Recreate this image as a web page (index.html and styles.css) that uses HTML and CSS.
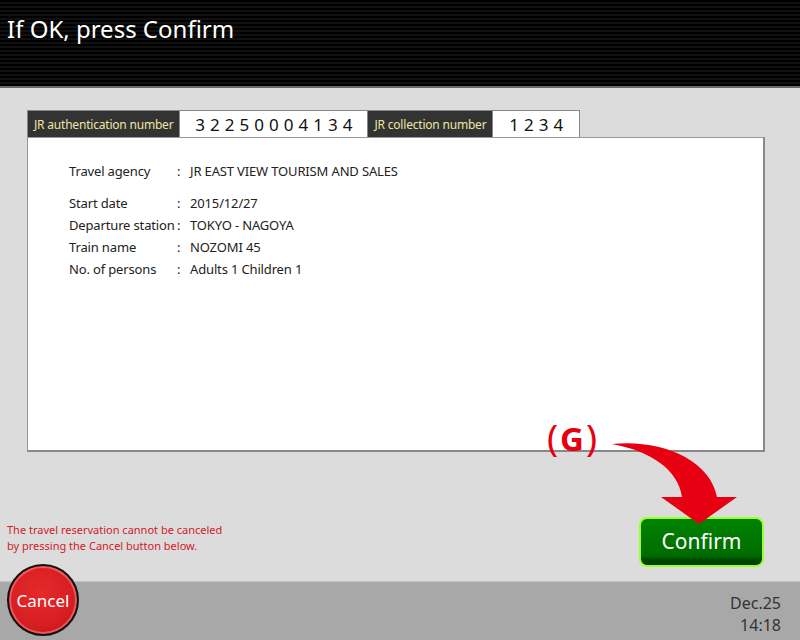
FILE: index.html
```html
<!DOCTYPE html>
<html lang="en">
<head>
    <meta charset="UTF-8">
    <meta name="viewport" content="width=device-width, initial-scale=1.0">
    <title>Confirm Reservation</title>
    <link rel="stylesheet" href="styles.css">
</head>
<body>
    <div class="screen">
        <div class="header">
            <h1>If OK, press Confirm</h1>
        </div>
        <div class="main">
            <div class="tabs">
                <div class="tab-label">JR authentication number</div>
                <div class="tab-value auth">3 2 2 5 0 0 0 4 1 3 4</div>
                <div class="tab-label">JR collection number</div>
                <div class="tab-value coll">1 2 3 4</div>
            </div>
            <div class="details">
                <div class="row first">
                    <span class="key">Travel agency</span><span class="colon">:</span><span class="val">JR EAST VIEW TOURISM AND SALES</span>
                </div>
                <div class="row">
                    <span class="key">Start date</span><span class="colon">:</span><span class="val">2015/12/27</span>
                </div>
                <div class="row">
                    <span class="key">Departure station</span><span class="colon">:</span><span class="val">TOKYO - NAGOYA</span>
                </div>
                <div class="row">
                    <span class="key">Train name</span><span class="colon">:</span><span class="val">NOZOMI 45</span>
                </div>
                <div class="row">
                    <span class="key">No. of persons</span><span class="colon">:</span><span class="val">Adults 1 Children 1</span>
                </div>
            </div>
            <div class="actions">
                <p class="note">The travel reservation cannot be canceled<br>by pressing the Cancel button below.</p>
                <button class="confirm">Confirm</button>
                <div class="marker"><span class="paren">(</span>G<span class="paren">)</span></div>
                <svg class="arrow" width="140" height="90" viewBox="0 0 140 90">
                    <path d="M2,7 C50,2 100,22 107,60 L127,60 L89,87 L51,60 L72,60 C68,32 40,14 2,7 Z" fill="#e60012"/>
                </svg>
            </div>
        </div>
        <div class="footer">
            <button class="cancel">Cancel</button>
            <div class="clock">
                <div>Dec.25</div>
                <div>14:18</div>
            </div>
        </div>
    </div>
</body>
</html>
```

FILE: styles.css
```css
body, html {
    margin: 0;
    padding: 0;
    width: 100%;
    height: 100%;
    font-family: "Noto Sans", "Open Sans", Arial, sans-serif;
    background: #dcdcdc;
    overflow: hidden;
}

.screen {
    display: flex;
    flex-direction: column;
    height: 640px;
    position: relative;
}

.header {
    height: 86px;
    background: repeating-linear-gradient(to bottom, #000 0, #000 2px, #111 2px, #111 4px);
    border-bottom: 2px solid #6a6a6a;
}

.header h1 {
    margin: 0;
    padding: 12px 0 0 7px;
    color: #fff;
    font-size: 24px;
    font-weight: normal;
}

.main {
    flex: 1;
    display: flex;
    flex-direction: column;
    padding: 22px 0 0 27px;
    position: relative;
}

.tabs {
    display: flex;
    height: 27px;
}

.tab-label {
    background: #333;
    color: #ebe7a3;
    font-size: 12px;
    letter-spacing: -0.2px;
    padding: 0 6px;
    display: flex;
    align-items: center;
    border: 1px solid #888;
    border-bottom: none;
}

.tab-value {
    background: #fff;
    color: #111;
    font-size: 17px;
    letter-spacing: 0.3px;
    display: flex;
    align-items: center;
    justify-content: center;
    border-top: 1px solid #888;
    white-space: pre;
}

.tab-value.auth {
    width: 187px;
}

.tab-value.coll {
    width: 86px;
    border-right: 1px solid #888;
}

.details {
    width: 694px;
    height: 290px;
    background: #fff;
    border: 1px solid #999;
    border-right: 2px solid #888;
    border-bottom: 2px solid #888;
    padding: 22px 0 0 41px;
    font-size: 13px;
    letter-spacing: -0.15px;
    color: #222;
}

.row {
    display: flex;
    height: 22px;
    align-items: center;
    white-space: nowrap;
}

.row.first {
    margin-bottom: 10px;
}

.key {
    width: 108px;
}

.colon {
    width: 13px;
}

.actions {
    flex: 1;
    display: flex;
    justify-content: space-between;
    align-items: flex-end;
    padding: 0 36px 14px 0;
    margin-left: -20px;
    position: relative;
}

.note {
    margin: 0 0 13px 0;
    color: #d0202a;
    font-size: 11px;
    line-height: 16px;
}

.confirm {
    width: 125px;
    height: 50px;
    border: 2px solid #9eff2a;
    border-radius: 8px;
    background: linear-gradient(to bottom, #008400 0, #006c00 80%, #004a00 88%, #003e00 100%);
    color: #fff;
    font-family: "Noto Sans", "Open Sans", Arial, sans-serif;
    font-size: 21px;
    padding: 0 0 3px 0;
}

.marker {
    position: absolute;
    left: 538px;
    top: -38px;
    color: #e60012;
    font-weight: bold;
    font-size: 33px;
    line-height: 46px;
}

.marker .paren {
    font-weight: normal;
    font-size: 37px;
    margin: 0 2px;
}

.arrow {
    position: absolute;
    left: 603px;
    top: -15px;
}

.footer {
    height: 58px;
    background: #a8a8a8;
    border-top: 1px solid #c4c4c4;
    display: flex;
    justify-content: flex-end;
    position: relative;
}

.cancel {
    position: absolute;
    left: 7px;
    top: -18px;
    width: 72px;
    height: 72px;
    border-radius: 50%;
    border: 2px solid #111;
    background: radial-gradient(circle at 45% 40%, #e52a2c 0, #d91f23 55%, #b5141a 100%);
    box-shadow: inset 0 0 0 2px #ea5a5a;
    color: #fff;
    font-family: "Noto Sans", "Open Sans", Arial, sans-serif;
    font-size: 17px;
    padding: 0;
}

.clock {
    padding: 10px 19px 0 0;
    color: #333;
    font-size: 16px;
    line-height: 22px;
    text-align: right;
}
```
